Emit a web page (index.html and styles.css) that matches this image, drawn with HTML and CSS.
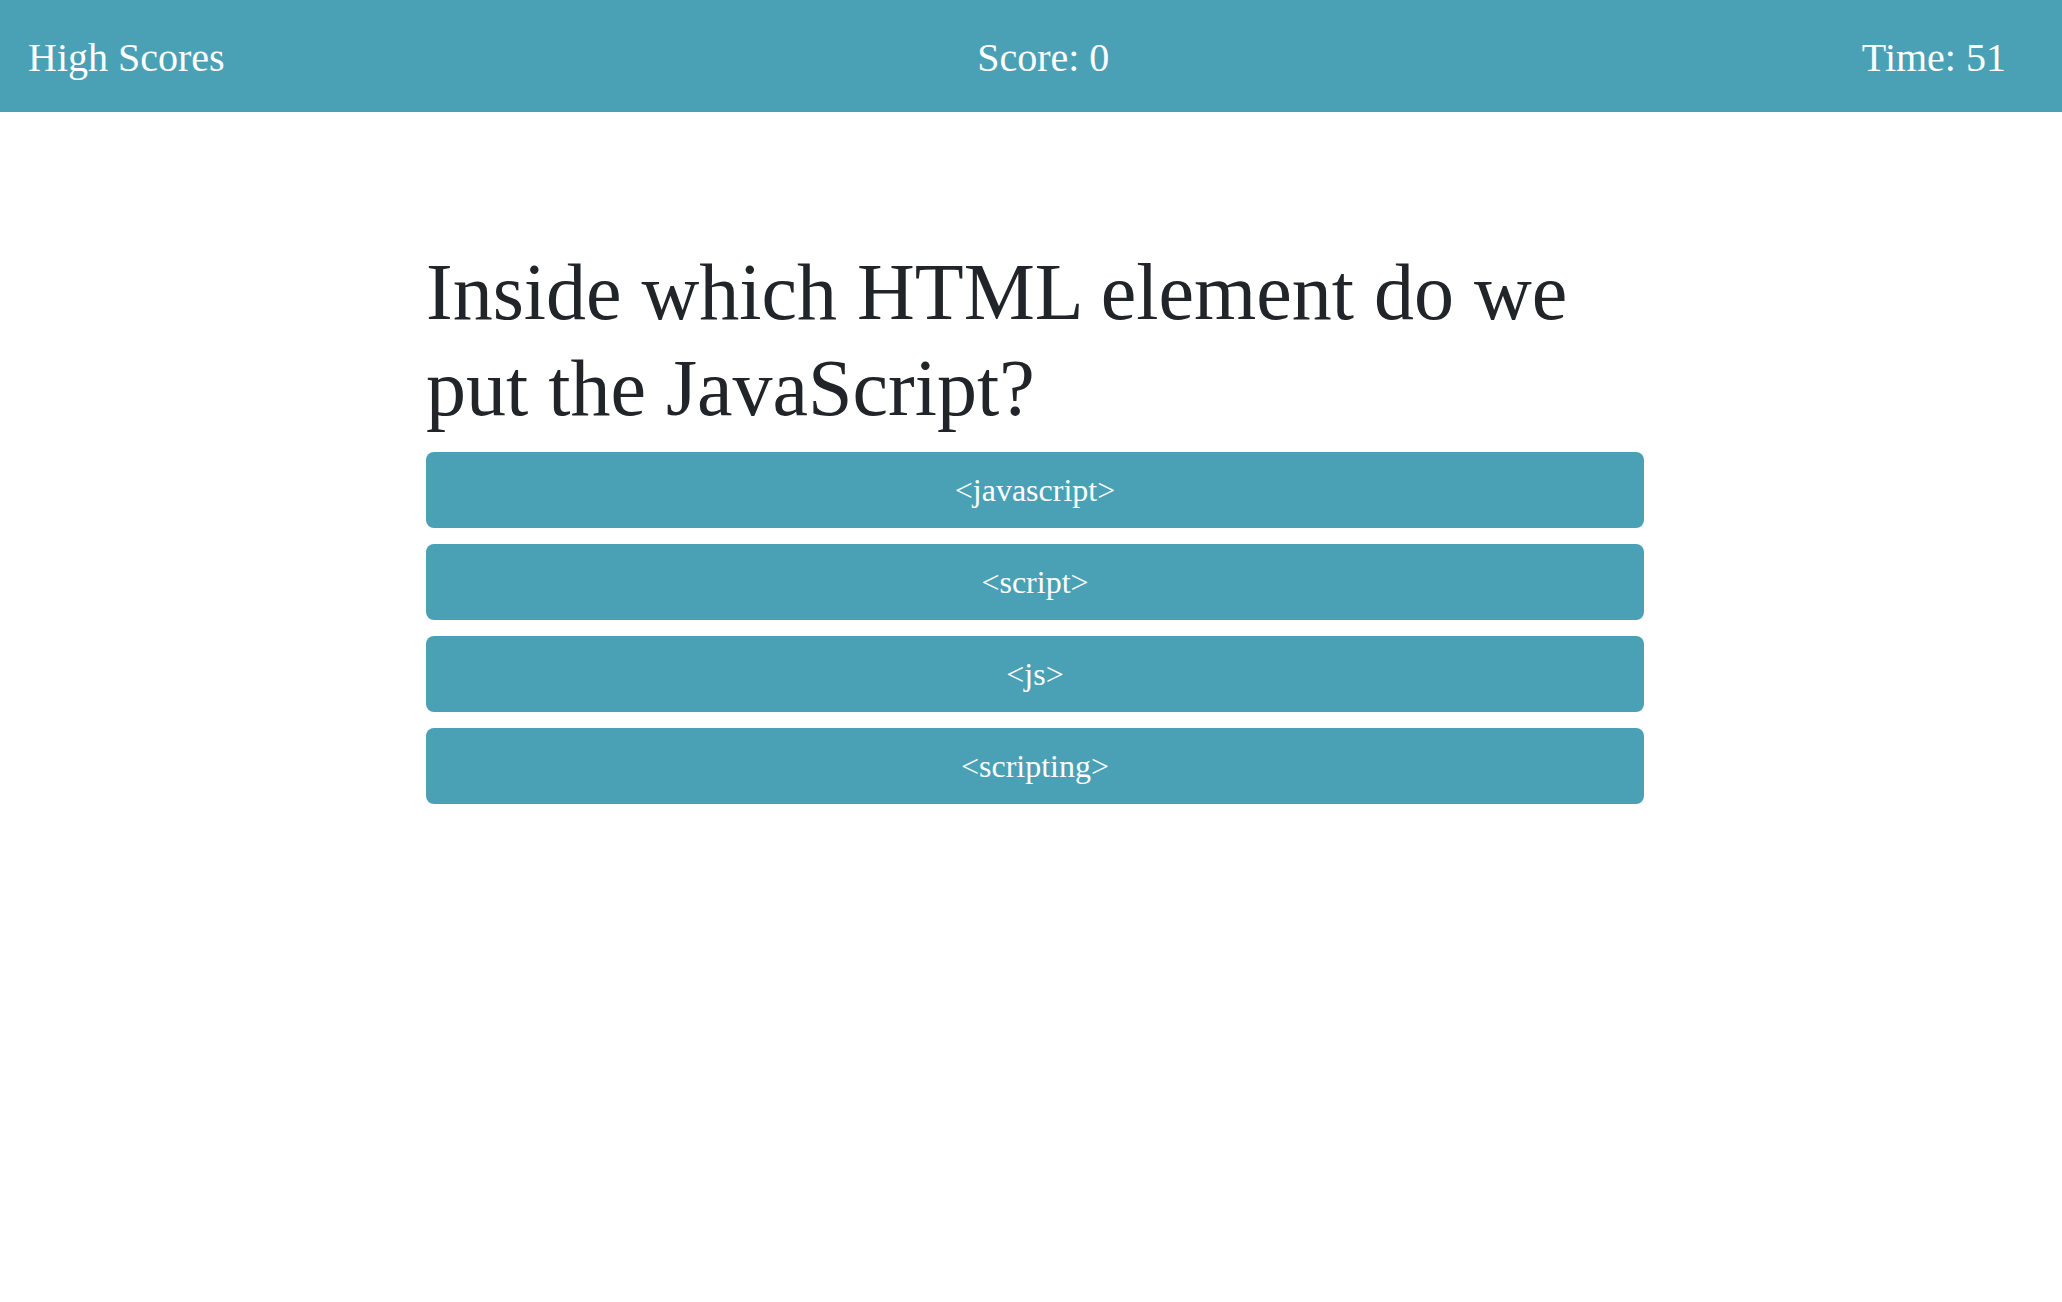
FILE: index.html
```html
<!DOCTYPE html>
<html lang="en">
<head>
<meta charset="utf-8">
<title>Quiz</title>
<link rel="stylesheet" href="styles.css">
</head>
<body>
<header class="topbar">
  <div class="topbar-item">High Scores</div>
  <div class="topbar-item">Score: 0</div>
  <div class="topbar-item">Time: 51</div>
</header>
<main class="quiz">
  <h1 class="question">Inside which HTML element do we put the JavaScript?</h1>
  <div class="answers">
    <button class="answer">&lt;javascript&gt;</button>
    <button class="answer">&lt;script&gt;</button>
    <button class="answer">&lt;js&gt;</button>
    <button class="answer">&lt;scripting&gt;</button>
  </div>
</main>
</body>
</html>
```
FILE: styles.css
```css
html, body {
  margin: 0;
  padding: 0;
  background: #ffffff;
  font-family: "Liberation Serif", "Times New Roman", serif;
  color: #212529;
}

.topbar {
  height: 112px;
  background: #4aa1b6;
  display: flex;
  justify-content: space-between;
  align-items: center;
  padding: 3px 56px 0 28px;
  box-sizing: border-box;
}

.topbar-item {
  color: #ffffff;
  font-size: 40px;
  line-height: 1.15;
}

.quiz {
  width: 1218px;
  margin: 132px auto 0;
  padding-left: 8px;
}

.question {
  font-size: 80px;
  font-weight: 400;
  line-height: 1.2;
  margin: 0 0 16px;
  padding: 0;
}

.answers {
  display: flex;
  flex-direction: column;
  gap: 16px;
}

.answer {
  display: block;
  width: 100%;
  height: 76px;
  border: none;
  border-radius: 8px;
  background: #4aa1b6;
  color: #ffffff;
  font-family: "Liberation Serif", "Times New Roman", serif;
  font-size: 32px;
  text-align: center;
  padding: 0;
  margin: 0;
}
```
